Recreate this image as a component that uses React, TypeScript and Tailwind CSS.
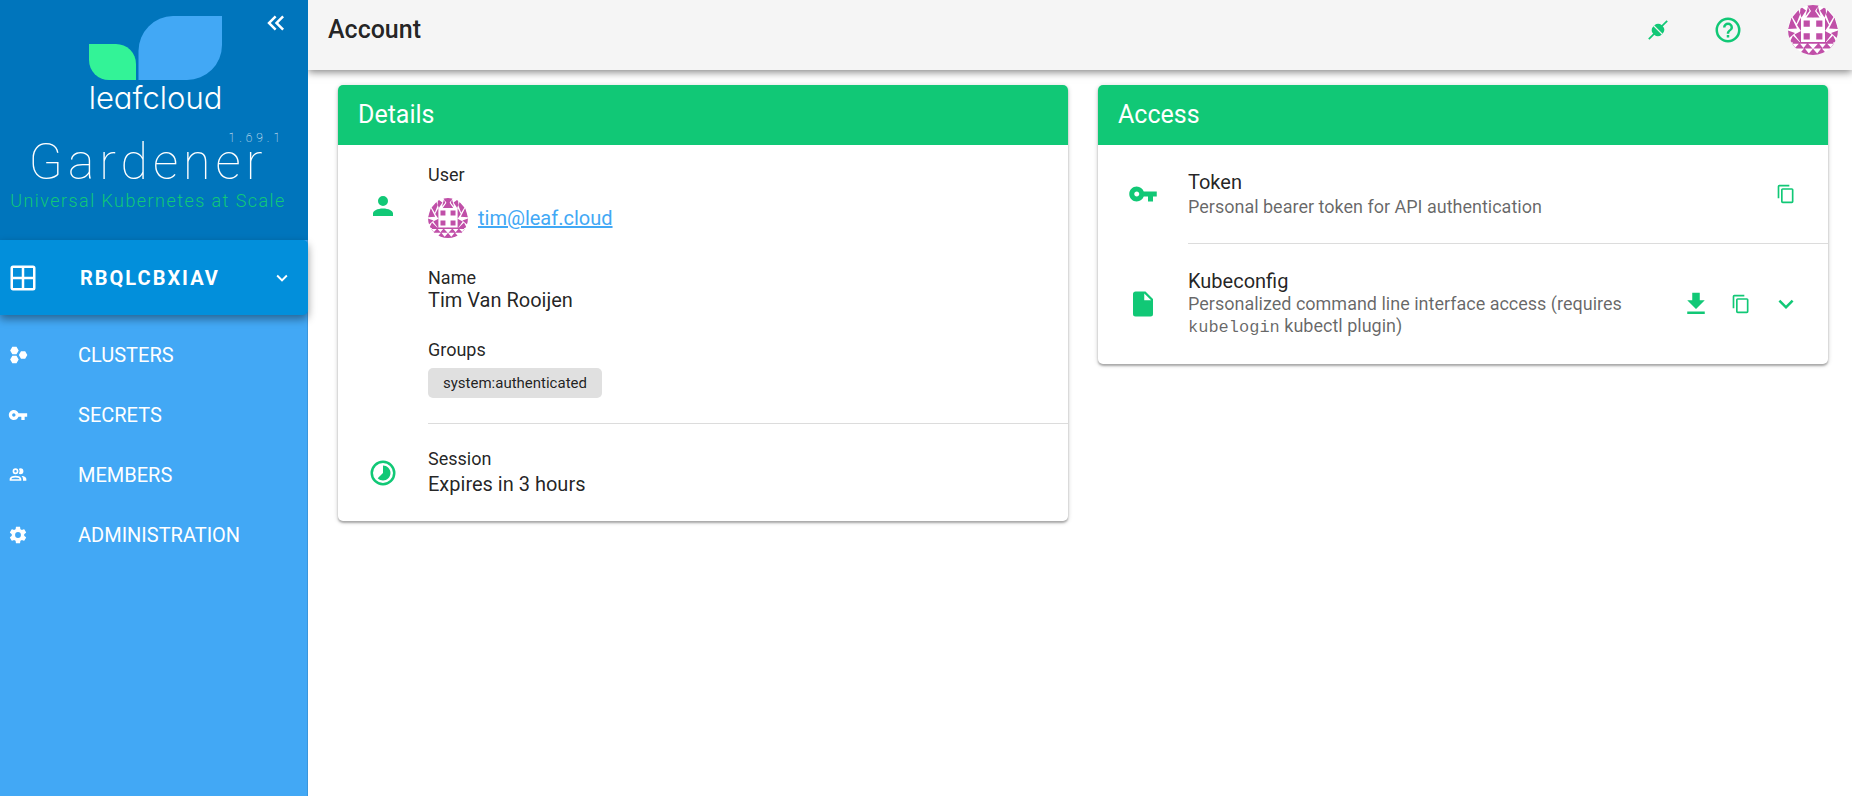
import type { ReactNode } from "react";

const ICONS = {
  collapse:
    "M18.41,7.41L17,6L11,12L17,18L18.41,16.59L13.83,12L18.41,7.41M12.41,7.41L11,6L5,12L11,18L12.41,16.59L7.83,12L12.41,7.41Z",
  account:
    "M12,4A4,4 0 0,1 16,8A4,4 0 0,1 12,12A4,4 0 0,1 8,8A4,4 0 0,1 12,4M12,14C16.42,14 20,15.79 20,18V20H4V18C4,15.79 7.58,14 12,14Z",
  help: "M11,18H13V16H11V18M12,2A10,10 0 0,0 2,12A10,10 0 0,0 12,22A10,10 0 0,0 22,12A10,10 0 0,0 12,2M12,20C7.59,20 4,16.41 4,12C4,7.59 7.59,4 12,4C16.41,4 20,7.59 20,12C20,16.41 16.41,20 12,20M12,6A4,4 0 0,0 8,10H10A2,2 0 0,1 12,8A2,2 0 0,1 14,10C14,12 11,11.75 11,15H13C13,12.75 16,12.5 16,10A4,4 0 0,0 12,6Z",
  grid: "M4,2H20A2,2 0 0,1 22,4V20A2,2 0 0,1 20,22H4C2.92,22 2,21.1 2,20V4A2,2 0 0,1 4,2M4,4V11H11V4H4M4,20H11V13H4V20M20,20V13H13V20H20M20,4H13V11H20V4Z",
  key: "M7 14C5.9 14 5 13.1 5 12S5.9 10 7 10 9 10.9 9 12 8.1 14 7 14M12.6 10C11.8 7.7 9.6 6 7 6C3.7 6 1 8.7 1 12S3.7 18 7 18C9.6 18 11.8 16.3 12.6 14H16V18H20V14H23V10H12.6Z",
  clusters:
    "M5.2,2H10.2L12.8,6.5L10.2,11H5.2L2.6,6.5L5.2,2M5.2,13H10.2L12.8,17.5L10.2,22H5.2L2.6,17.5L5.2,13M15.6,7.5H20.600L23.2,12L20.600,16.500H15.6L13,12L15.6,7.5Z",
  members:
    "M13.07 10.41A5 5 0 0 0 13.07 4.59A3.39 3.39 0 0 1 15 4A3.5 3.5 0 0 1 15 11A3.39 3.39 0 0 1 13.07 10.41M5.5 7.5A3.5 3.5 0 1 1 9 11A3.5 3.5 0 0 1 5.5 7.5M7.5 7.5A1.5 1.5 0 1 0 9 6A1.5 1.5 0 0 0 7.5 7.5M16 17V19H2V17S2 13 9 13 16 17 16 17M14 17C13.86 16.22 12.67 15 9 15S4.07 16.31 4 17M15.95 13A5.32 5.32 0 0 1 18 17V19H22V17S22 13.37 15.94 13Z",
  cog: "M12,15.5A3.5,3.5 0 0,1 8.5,12A3.5,3.5 0 0,1 12,8.5A3.5,3.5 0 0,1 15.5,12A3.5,3.5 0 0,1 12,15.5M19.43,12.97C19.47,12.65 19.5,12.33 19.5,12C19.5,11.67 19.47,11.34 19.43,11L21.54,9.37C21.73,9.22 21.78,8.95 21.66,8.73L19.66,5.27C19.54,5.05 19.27,4.96 19.05,5.05L16.56,6.05C16.04,5.66 15.5,5.32 14.87,5.07L14.5,2.42C14.46,2.18 14.25,2 14,2H10C9.75,2 9.54,2.18 9.5,2.42L9.13,5.07C8.5,5.32 7.96,5.66 7.44,6.05L4.95,5.05C4.73,4.96 4.46,5.05 4.34,5.27L2.34,8.73C2.21,8.95 2.27,9.22 2.46,9.37L4.57,11C4.53,11.34 4.5,11.67 4.5,12C4.5,12.33 4.53,12.65 4.57,12.97L2.46,14.63C2.27,14.78 2.21,15.05 2.34,15.27L4.34,18.73C4.46,18.95 4.73,19.03 4.95,18.95L7.44,17.94C7.96,18.34 8.5,18.68 9.13,18.93L9.5,21.58C9.54,21.82 9.75,22 10,22H14C14.25,22 14.46,21.82 14.5,21.58L14.87,18.93C15.5,18.67 16.04,18.34 16.56,17.94L19.05,18.95C19.27,19.03 19.54,18.95 19.66,18.73L21.66,15.27C21.78,15.05 21.73,14.78 21.54,14.63L19.43,12.97Z",
  copy: "M19,21H8V7H19M19,5H8A2,2 0 0,0 6,7V21A2,2 0 0,0 8,23H19A2,2 0 0,0 21,21V7A2,2 0 0,0 19,5M16,1H4A2,2 0 0,0 2,3V17H4V3H16V1Z",
  download: "M5,20H19V18H5M19,9H15V3H9V9H5L12,16L19,9Z",
  chevronDown:
    "M7.41,8.58L12,13.17L16.59,8.58L18,10L12,16L6,10L7.41,8.58Z",
  file: "M13,9V3.5L18.5,9M6,2C4.89,2 4,2.89 4,4V20A2,2 0 0,0 6,22H18A2,2 0 0,0 20,20V8L14,2H6Z",
  timelapse:
    "M16.24,7.76C15.07,6.58 13.53,6 12,6V12L7.76,16.24C10.1,18.58 13.9,18.58 16.24,16.24C18.59,13.9 18.59,10.1 16.24,7.76M12,22A10,10 0 0,1 2,12A10,10 0 0,1 12,2A10,10 0 0,1 22,12A10,10 0 0,1 12,22M12,4A8,8 0 0,0 4,12A8,8 0 0,0 12,20A8,8 0 0,0 20,12A8,8 0 0,0 12,4Z",
};

type IconName = keyof typeof ICONS;

function Icon({ name, className = "size-[30px]" }: { name: IconName; className?: string }) {
  return (
    <svg viewBox="0 0 24 24" fill="currentColor" aria-hidden="true" className={`shrink-0 ${className}`}>
      <path d={ICONS[name]} />
    </svg>
  );
}

function ConnectionIcon() {
  return (
    <svg viewBox="0 0 24 24" aria-hidden="true" className="size-6">
      <g transform="rotate(-45 12 12)">
        <path d="M-1 12H25" stroke="currentColor" strokeWidth="1.7" />
        <rect x="6" y="6.2" width="12" height="11.600" rx="4.8" fill="currentColor" />
        <path d="M12 6V18" stroke="#f5f5f5" strokeWidth="1.1" />
      </g>
    </svg>
  );
}

/* The left half of the identicon; the right half is its mirror image. */
const AVATAR_HALF = [
  "M15.600 15.600H21.800V21.800H15.600Z",
  "M15.600 28.200H21.800V34.400H15.600Z",
  "M25.200 0H19L23 6L18.500 12.500H25.200Z",
  "M12.500 1.500L18 5.500L13.500 12.500L12 8Z",
  "M20 1.500L21.500 6L17.500 11Z",
  "M10.500 5L12 9.500L8.500 18.500L4.500 12Z",
  "M3.500 12.500L9 23.500L0 24Z",
  "M13 12.500V26L9 20Z",
  "M0 25.500L7 28L0 34Z",
  "M13 26V38L6.500 29.500Z",
  "M5 37H25.200V38.800H5Z",
  "M5 30.500L12 37.500H1.500Z",
  "M11.500 38L16 43.500H6.500Z",
  "M19.500 38L24.500 43.500H15Z",
  "M16.500 43L22 50H10.500Z",
  "M25.200 43.500V50H19.500Z",
  "M4 38L9 45L3 43Z",
];

function Avatar({ className }: { className: string }) {
  return (
    <svg viewBox="0 0 50 50" role="img" aria-label="Avatar of tim@leaf.cloud" className={`rounded-full ${className}`}>
      <rect width="50" height="50" fill="#fff" />
      <g fill="#c04fa8">
        <path d={AVATAR_HALF.join("")} />
        <path d={AVATAR_HALF.join("")} transform="matrix(-1 0 0 1 50 0)" />
      </g>
    </svg>
  );
}

function Logo() {
  return (
    <div className="flex flex-col items-center pl-[3px]">
      <svg viewBox="0 0 133 64" aria-hidden="true" className="h-16 w-[133px]">
        <path d="M0 28H27A20 20 0 0 1 47 48V64H20A20 20 0 0 1 0 44Z" fill="#33f397" />
        <path d="M84 0H133V29A35 35 0 0 1 98 64H49.500V35A35 35 0 0 1 84 0Z" fill="#42a8f5" />
      </svg>
      <span className="font-['Inter',sans-serif] text-[31px] leading-9 font-light text-white [font-feature-settings:'cv11']">
        leafcloud
      </span>
    </div>
  );
}

const NAV: { label: string; icon: IconName }[] = [
  { label: "Clusters", icon: "clusters" },
  { label: "Secrets", icon: "key" },
  { label: "Members", icon: "members" },
  { label: "Administration", icon: "cog" },
];

function Sidebar() {
  return (
    <aside className="flex w-[308px] shrink-0 flex-col border-r border-[#3a96dc] bg-[#42a8f5] text-white">
      <div className="relative -mr-px flex h-60 flex-col items-center bg-[#0075bc] pt-4">
        <Logo />
        <button type="button" aria-label="Collapse navigation" className="absolute top-2 right-[17px]">
          <Icon name="collapse" />
        </button>
        <div className="mt-[17px] flex flex-col items-center pr-3">
          <h1 className="text-[50px] leading-[58px] font-thin tracking-[5px]">Gardener</h1>
          <p className="text-[18px] leading-5 font-light tracking-[0.08em] whitespace-nowrap text-[#11c878]">
            Universal Kubernetes at Scale
          </p>
        </div>
        <span className="absolute top-[130px] right-6 text-[12px] leading-4 font-thin tracking-[4px]">
          1.69.1
        </span>
      </div>
      <button
        type="button"
        className="relative -mr-px flex h-[75px] items-center rounded-r-[5px] bg-[#028fdb] pr-[15px] pl-2 shadow-[0_4px_8px_rgba(0,0,0,0.4)]"
      >
        <Icon name="grid" />
        <span className="ml-[42px] flex-1 text-left text-[20px] leading-6 font-bold tracking-[2px]">
          RBQLCBXIAV
        </span>
        <Icon name="chevronDown" className="size-[22px]" />
      </button>
      <nav className="flex flex-col pt-[10px]">
        {NAV.map((item) => (
          <a key={item.label} href={`#${item.label.toLowerCase()}`} className="flex h-[60px] items-center gap-[50px] pl-2">
            <Icon name={item.icon} className="size-5" />
            <span className="text-[20px] leading-6 uppercase">{item.label}</span>
          </a>
        ))}
      </nav>
    </aside>
  );
}

function Card({ title, children }: { title: string; children: ReactNode }) {
  return (
    <section className="overflow-hidden rounded-[5px] bg-white shadow-[0_2px_2px_rgba(0,0,0,0.25),0_1px_5px_rgba(0,0,0,0.2)]">
      <h2 className="flex h-[60px] items-center bg-[#11c876] px-5 text-[25px] leading-[30px] text-white">{title}</h2>
      {children}
    </section>
  );
}

function Divider() {
  return <hr className="ml-[90px] border-t border-[#dcdcdc]" />;
}

function IconCell({ name }: { name: IconName }) {
  return (
    <div className="flex w-[90px] shrink-0 justify-center text-[#11c876]">
      <Icon name={name} />
    </div>
  );
}

function DetailsCard() {
  return (
    <Card title="Details">
      <div className="flex items-start pt-5 pb-[25px]">
        <div className="pt-[26px]">
          <IconCell name="account" />
        </div>
        <dl>
          <dt className="text-[18px] leading-5">User</dt>
          <dd className="mt-[13px] flex items-center gap-[10px]">
            <Avatar className="size-10" />
            <a href="mailto:tim@leaf.cloud" className="text-[20px] leading-6 text-[#42a8f5] underline">
              tim@leaf.cloud
            </a>
          </dd>
          <dt className="mt-[30px] text-[18px] leading-5">Name</dt>
          <dd className="text-[20px] leading-6">Tim Van Rooijen</dd>
          <dt className="mt-7 text-[18px] leading-5">Groups</dt>
          <dd className="mt-2 flex">
            <span className="flex h-[30px] items-center rounded-[5px] bg-[#e0e0e0] px-[15px] text-[15px] leading-5">
              system:authenticated
            </span>
          </dd>
        </dl>
      </div>
      <Divider />
      <div className="flex items-center py-[25px]">
        <IconCell name="timelapse" />
        <dl>
          <dt className="text-[18px] leading-5">Session</dt>
          <dd className="mt-[3px] text-[20px] leading-6">Expires in 3 hours</dd>
        </dl>
      </div>
    </Card>
  );
}

function ActionButton({ name, label, small }: { name: IconName; label: string; small?: boolean }) {
  return (
    <button type="button" aria-label={label} className="flex w-[45px] items-center justify-center text-[#11c876]">
      <Icon name={name} className={small ? "size-5" : "size-[30px]"} />
    </button>
  );
}

function AccessCard() {
  return (
    <Card title="Access">
      <div className="flex items-center py-[25px] pr-5">
        <IconCell name="key" />
        <div className="flex-1">
          <h3 className="text-[20px] leading-6">Token</h3>
          <p className="mt-0.5 text-[18px] leading-[22px] text-black/60">Personal bearer token for API authentication</p>
        </div>
        <ActionButton name="copy" label="Copy token" small />
      </div>
      <Divider />
      <div className="flex items-center py-[25px] pr-5">
        <IconCell name="file" />
        <div className="flex-1">
          <h3 className="text-[20px] leading-6">Kubeconfig</h3>
          <p className="text-[18px] leading-[22px] text-black/60">
            Personalized command line interface access (requires{" "}
            <code className="font-['Liberation_Mono',monospace] text-[17px]">kubelogin</code> kubectl plugin)
          </p>
        </div>
        <div className="ml-[30px] flex">
          <ActionButton name="download" label="Download kubeconfig" />
          <ActionButton name="copy" label="Copy kubeconfig" small />
          <ActionButton name="chevronDown" label="Show kubeconfig" />
        </div>
      </div>
    </Card>
  );
}

export default function App() {
  return (
    <div className="flex min-h-screen bg-white font-['Roboto',sans-serif] text-black/87">
      <Sidebar />
      <div className="flex min-w-0 flex-1 flex-col">
        <header className="relative flex h-[70px] items-center bg-[#f5f5f5] pr-[14px] pb-[10px] pl-5 shadow-[0_2px_8px_rgba(0,0,0,0.5)] [clip-path:inset(0_0_-20px_0)]">
          <h1 className="flex-1 text-[25px] leading-[30px] font-medium">Account</h1>
          <button type="button" aria-label="Connection" className="mr-[43px] text-[#11c876]">
            <ConnectionIcon />
          </button>
          <button type="button" aria-label="Help" className="mr-[45px] text-[#11c876]">
            <Icon name="help" />
          </button>
          <button type="button" aria-label="Account menu">
            <Avatar className="size-[50px]" />
          </button>
        </header>
        <main className="grid grid-cols-2 items-start gap-[30px] pt-[15px] pr-6 pb-6 pl-[30px]">
          <DetailsCard />
          <AccessCard />
        </main>
      </div>
    </div>
  );
}
